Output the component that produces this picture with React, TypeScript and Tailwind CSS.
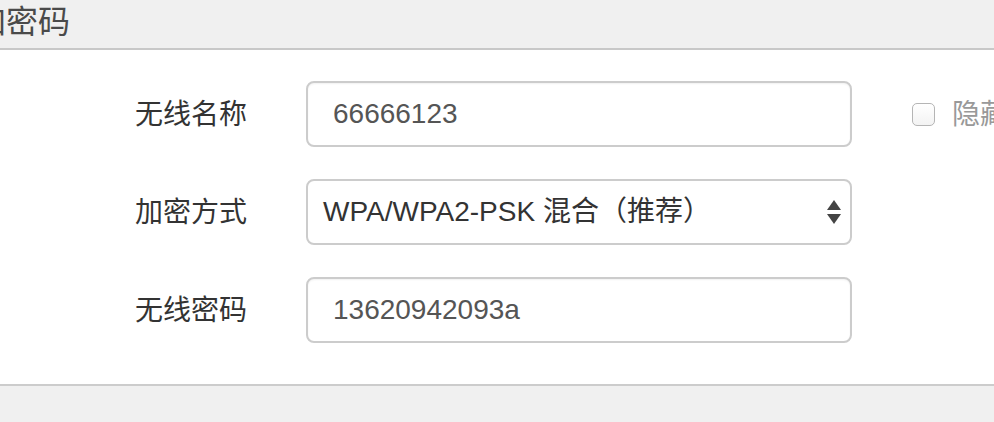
import React from "react";

const cjk = { fontFamily: '"Noto Sans CJK SC", "Noto Sans", sans-serif' };
const latin = { fontFamily: '"Liberation Sans", "Noto Sans CJK SC", Arial, sans-serif' };

function Label({ children }: { children: React.ReactNode }) {
  return (
    <div className="w-[171px] shrink-0 text-[28px] leading-[40px] text-[#333] -mt-[5px]" style={cjk}>
      {children}
    </div>
  );
}

function TextInput({ value }: { value: string }) {
  return (
    <div
      className="w-[546px] h-[66px] shrink-0 rounded-[8px] border-2 border-[#cccccc] bg-white flex items-center pl-[25px] text-[28px] text-[#555] shadow-[inset_0_1px_2px_rgba(0,0,0,0.06)]"
      style={latin}
    >
      {value}
    </div>
  );
}

export default function App() {
  return (
    <div className="w-[994px] h-[422px] overflow-hidden bg-[#f0f0f0]">
      <div className="h-[50px] border-b-2 border-[#c8c8c8] bg-[#f0f0f0] overflow-hidden">
        <div className="-ml-[26px] whitespace-nowrap text-[32px] leading-[38px] text-[#4a4a4a]" style={cjk}>
          加密码
        </div>
      </div>
      <div className="bg-white border-b-2 border-[#cccccc] pt-[31px] pb-[41px] pl-[135px] flex flex-col gap-[32px]">
        <div className="flex items-center h-[66px]">
          <Label>无线名称</Label>
          <TextInput value="66666123" />
          <div className="flex items-center ml-[60px] shrink-0">
            <div className="w-[23px] h-[23px] rounded-[5px] border-[1.5px] border-[#b5b5b5] bg-gradient-to-b from-white to-[#f3f3f3]" />
            <span className="ml-[17px] text-[28px] text-[#999] whitespace-nowrap -mt-[4px]" style={cjk}>
              隐藏
            </span>
          </div>
        </div>
        <div className="flex items-center h-[66px]">
          <Label>加密方式</Label>
          <div
            className="relative w-[546px] h-[66px] shrink-0 rounded-[8px] border-2 border-[#cccccc] bg-white flex items-center pl-[15px] text-[28px] text-[#333]"
            style={latin}
          >
            WPA/WPA2-PSK 混合（推荐）
            <svg className="absolute right-[8px] top-[19px]" width="16" height="26" viewBox="0 0 16 26">
              <polygon points="8,0 15,10 1,10" fill="#444" />
              <polygon points="1,14 15,14 8,24" fill="#444" />
            </svg>
          </div>
        </div>
        <div className="flex items-center h-[66px]">
          <Label>无线密码</Label>
          <TextInput value="13620942093a" />
        </div>
      </div>
    </div>
  );
}
